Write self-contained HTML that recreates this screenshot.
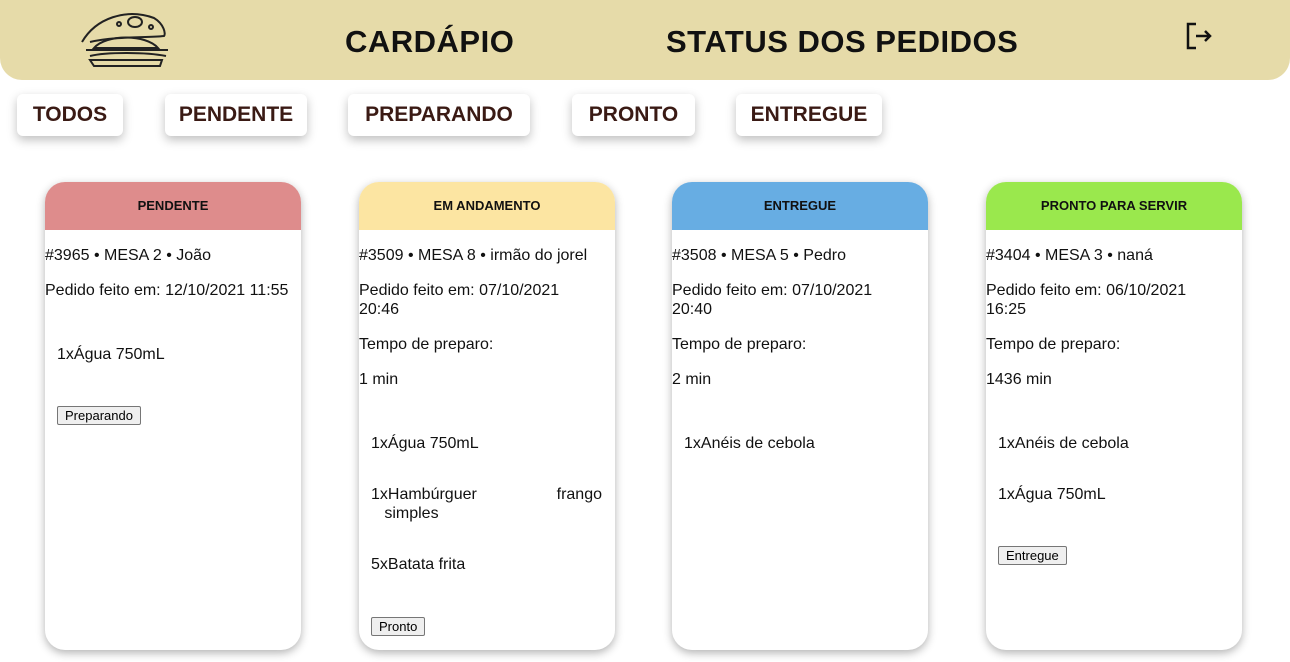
<!DOCTYPE html>
<html><head><meta charset="utf-8"><style>
*{box-sizing:border-box}
body{margin:0;width:1290px;height:662px;background:#fff;font-family:"Liberation Sans",sans-serif;color:#111;position:relative;overflow:hidden}
.hdr{position:absolute;left:0;top:0;width:1290px;height:80px;background:#e6dba9;border-radius:0 0 22px 22px}
.nav{position:absolute;top:25px;font-size:31px;font-weight:bold;letter-spacing:0.5px;color:#111;line-height:34px}
.btn{position:absolute;top:94px;height:42px;background:#fff;border-radius:6px;box-shadow:0 4px 10px rgba(0,0,0,.25);font-weight:bold;font-size:21px;color:#3a1a14;text-align:center;line-height:42px}
.card{position:absolute;top:182px;width:256px;height:468px;background:#fff;border-radius:20px;box-shadow:0 3px 9px rgba(0,0,0,.3);overflow:hidden}
.card .h{height:48px;line-height:48px;text-align:center;font-size:13px;font-weight:bold;color:#111}
.t{position:absolute;left:0;font-size:16px;line-height:19px;width:256px}
.it{position:absolute;left:12px;right:13px;font-size:16px;line-height:19px}
.b{position:absolute;left:12px;font-size:13px;padding:1px 7px;border:1px solid #767676;border-radius:2px;background:#efefef;color:#000}
</style></head><body>
<div class="hdr"></div>
<svg style="position:absolute;left:76px;top:8px" width="100" height="62" viewBox="0 0 100 62" fill="none" stroke="#222" stroke-width="2">
<path d="M6 34 C20 10 50 0 78 10 C88 16 90 26 88 28 C70 30 40 28 14 34"/>
<ellipse cx="59" cy="14" rx="7" ry="5"/>
<path d="M18 40 C30 26 70 26 82 40 Z"/>
<path d="M10 42 L92 42 M14 48 C30 44 70 44 90 48"/>
<path d="M14 52 L86 52 L84 58 L18 58 Z"/>
<circle cx="43" cy="16" r="2"/><circle cx="75" cy="19" r="2"/>
</svg>
<div class="nav" style="left:345px">CARDÁPIO</div>
<div class="nav" style="left:666px">STATUS DOS PEDIDOS</div>
<svg style="position:absolute;left:1186px;top:22px" width="28" height="28" viewBox="0 0 28 28" fill="none" stroke="#111" stroke-width="2.5">
<path d="M10 2 H2 V26 H10 M10 14 H24 M19 9 L24 14 L19 19"/>
</svg>
<div class="btn" style="left:17px;width:106px">TODOS</div>
<div class="btn" style="left:165px;width:142px">PENDENTE</div>
<div class="btn" style="left:348px;width:182px">PREPARANDO</div>
<div class="btn" style="left:572px;width:123px">PRONTO</div>
<div class="btn" style="left:736px;width:146px">ENTREGUE</div>

<div class="card" style="left:45px"><div class="h" style="background:#de8c8c">PENDENTE</div>
<div class="t" style="top:64px">#3965 • MESA 2 • João</div>
<div class="t" style="top:99px">Pedido feito em: 12/10/2021 11:55</div>
<div class="it" style="top:163px">1xÁgua 750mL</div>
<div class="b" style="top:224px">Preparando</div></div>

<div class="card" style="left:359px"><div class="h" style="background:#fce5a2">EM ANDAMENTO</div>
<div class="t" style="top:64px">#3509 • MESA 8 • irmão do jorel</div>
<div class="t" style="top:99px">Pedido feito em: 07/10/2021<br>20:46</div>
<div class="t" style="top:153px">Tempo de preparo:</div>
<div class="t" style="top:188px">1 min</div>
<div class="it" style="top:252px">1xÁgua 750mL</div>
<div class="it" style="top:303px">1xHambúrguer<span style="float:right">frango</span><br>&nbsp;&nbsp;&nbsp;simples</div>
<div class="it" style="top:373px">5xBatata frita</div>
<div class="b" style="top:435px">Pronto</div></div>

<div class="card" style="left:672px"><div class="h" style="background:#67ade3">ENTREGUE</div>
<div class="t" style="top:64px">#3508 • MESA 5 • Pedro</div>
<div class="t" style="top:99px">Pedido feito em: 07/10/2021<br>20:40</div>
<div class="t" style="top:153px">Tempo de preparo:</div>
<div class="t" style="top:188px">2 min</div>
<div class="it" style="top:252px">1xAnéis de cebola</div></div>

<div class="card" style="left:986px"><div class="h" style="background:#9ae84d">PRONTO PARA SERVIR</div>
<div class="t" style="top:64px">#3404 • MESA 3 • naná</div>
<div class="t" style="top:99px">Pedido feito em: 06/10/2021<br>16:25</div>
<div class="t" style="top:153px">Tempo de preparo:</div>
<div class="t" style="top:188px">1436 min</div>
<div class="it" style="top:252px">1xAnéis de cebola</div>
<div class="it" style="top:303px">1xÁgua 750mL</div>
<div class="b" style="top:364px">Entregue</div></div>
</body></html>
